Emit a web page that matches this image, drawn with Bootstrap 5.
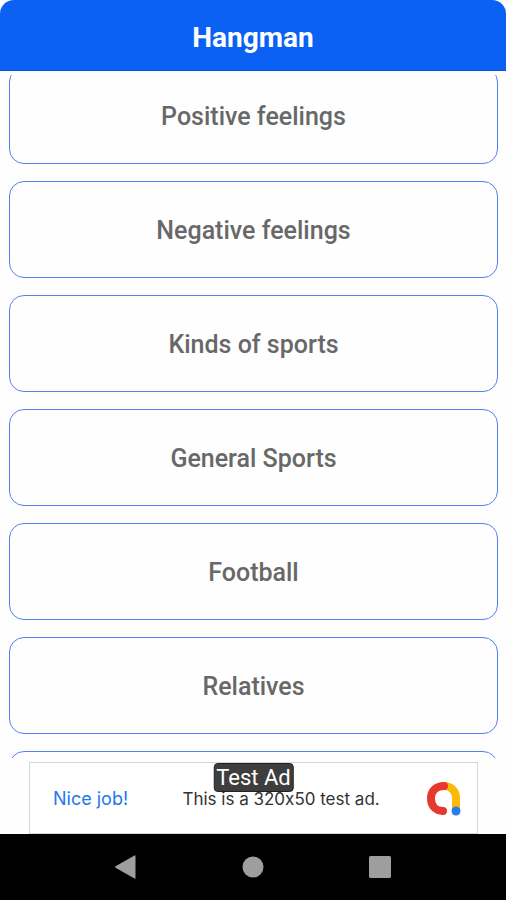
<!DOCTYPE html>
<html lang="en">
<head>
<meta charset="utf-8">
<meta name="viewport" content="width=device-width, initial-scale=1">
<title>Hangman</title>
<link href="https://cdn.jsdelivr.net/npm/bootstrap@5.3.0/dist/css/bootstrap.min.css" rel="stylesheet">
<style>
  body { font-family: Roboto, "Liberation Sans", sans-serif; background: #fefefe; }
  .app-bar { background: #0b61f4; height: 71px; border-bottom: 1px solid #0a50e0; border-radius: 14px 14px 0 0; padding-top: 6px; }
  .app-title { font-size: 28px; line-height: 32px; font-weight: 700; }
  .topic-list { margin-top: 4px; padding: 0 8px 0 9px; }
  .topic-stack { gap: 17px; margin-top: -8px; }
  .topic { height: 97px; border: 1px solid #5580f2; border-radius: 15px; background: #fefefe; color: #686868; font-size: 25px; line-height: 32px; font-weight: 500; padding: 3px 0 0; }
  .ad-banner { margin: 4px 28px 0 29px; height: 72px; border: 1px solid #d4d6d8; color: #333; font-family: Inter, Roboto, sans-serif; font-size: 17px; line-height: 20px; padding: 2px 15px 0 23px; }
  .ad-banner a { color: #2478ee; font-size: 18px; }
  .ad-text { font-feature-settings: "calt" 0; }
  .ad-tag { top: 0; background: #3e3e3e; border: 1px solid #222; border-radius: 4px; font-family: Roboto, sans-serif; font-size: 22px; line-height: 24px; padding: 2px 2px 1px; }
  .system-bar { height: 66px; background: #000; padding: 0 62px; }
  .system-bar button { line-height: 0; }
</style>
<script src="https://cdn.jsdelivr.net/npm/bootstrap@5.3.0/dist/js/bootstrap.bundle.min.js" defer></script>
</head>
<body>
<div class="d-flex flex-column vh-100 overflow-hidden">
  <header class="app-bar d-flex align-items-center justify-content-center flex-shrink-0">
    <h1 class="app-title text-white m-0">Hangman</h1>
  </header>

  <main class="topic-list flex-fill overflow-hidden">
    <div class="topic-stack d-flex flex-column">
      <button type="button" class="topic w-100 flex-shrink-0">Positive feelings</button>
      <button type="button" class="topic w-100 flex-shrink-0">Negative feelings</button>
      <button type="button" class="topic w-100 flex-shrink-0">Kinds of sports</button>
      <button type="button" class="topic w-100 flex-shrink-0">General Sports</button>
      <button type="button" class="topic w-100 flex-shrink-0">Football</button>
      <button type="button" class="topic w-100 flex-shrink-0">Relatives</button>
      <button type="button" class="topic w-100 flex-shrink-0" aria-label="Next topic"></button>
    </div>
  </main>

  <aside class="ad-banner position-relative d-flex align-items-center justify-content-between flex-shrink-0 bg-white">
    <a href="#" class="text-decoration-none">Nice job!</a>
    <span class="ad-text ms-auto me-auto ps-2">This is a 320x50 test ad.</span>
    <svg width="36" height="36" viewBox="0 0 36 36" fill="none" stroke-width="8" stroke-linecap="round" aria-hidden="true">
      <path d="M18 5C25 5 30 10 30 17V30" stroke="#fbb90a"/>
      <path d="M18 5C10 5 5 10 5 17.500C5 25 10 30 17 30" stroke="#e6392d"/>
      <circle cx="30" cy="30" r="4.500" fill="#2a7de9"/>
    </svg>
    <span class="ad-tag position-absolute start-50 translate-middle-x text-white text-nowrap">Test Ad</span>
  </aside>

  <nav class="system-bar d-flex align-items-center justify-content-around flex-shrink-0" aria-label="System">
    <button type="button" class="btn p-0 border-0" aria-label="Back">
      <svg width="24" height="24" viewBox="0 0 24 24" fill="#9e9e9e"><path d="M1.500 11.200L20.500.4Q21.500 0 21.500 1V23Q21.500 24 20.500 23.500L1.500 12.800Q.5 12 1.500 11.200Z"/></svg>
    </button>
    <button type="button" class="btn p-0 border-0" aria-label="Home">
      <svg width="24" height="24" viewBox="0 0 24 24" fill="#9e9e9e"><circle cx="12" cy="12" r="10.500"/></svg>
    </button>
    <button type="button" class="btn p-0 border-0" aria-label="Recent apps">
      <svg width="24" height="24" viewBox="0 0 24 24" fill="#9e9e9e"><rect x="1" y="1" width="22" height="22" rx="1.500"/></svg>
    </button>
  </nav>
</div>
</body>
</html>
